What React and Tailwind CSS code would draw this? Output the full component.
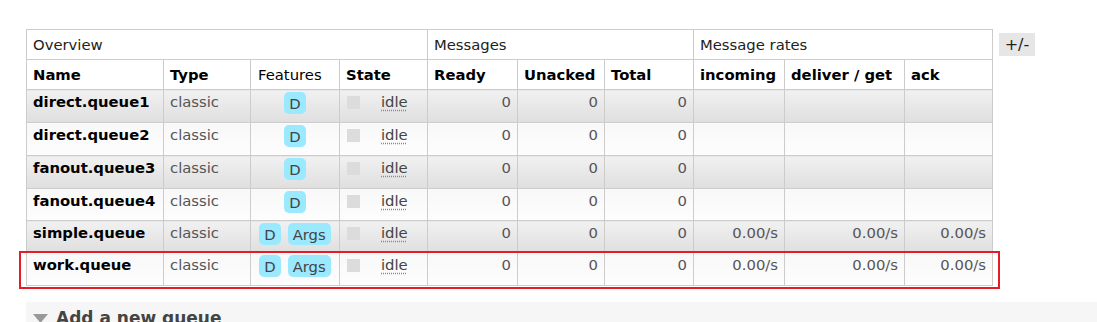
import React from "react";

const queues = [
  { name: "direct.queue1", args: false, rates: false },
  { name: "direct.queue2", args: false, rates: false },
  { name: "fanout.queue3", args: false, rates: false },
  { name: "fanout.queue4", args: false, rates: false },
  { name: "simple.queue", args: true, rates: true },
  { name: "work.queue", args: true, rates: true },
];

const rowHeights = ["h-[33px]", "h-[33px]", "h-[33px]", "h-[32px]", "h-[32px]", "h-[33px]"];

function Badge({ children }) {
  return (
    <span className="inline-flex h-[22px] items-center rounded-[5px] bg-[#9be9ff] px-[5px] text-[#444]">
      {children}
    </span>
  );
}

function QueueRow({ q, i }) {
  const bg =
    i % 2 === 0
      ? "bg-linear-to-b from-[#f1f1f1] to-[#dfdfdf]"
      : "bg-linear-to-b from-[#f8f8f8] to-[#fdfdfd]";
  const td = `border border-[#cccccc] align-top pt-[3px] px-[6px] ${bg}`;
  return (
    <tr className={rowHeights[i]}>
      <td className={`${td} font-bold text-black`}>{q.name}</td>
      <td className={`${td} text-[#555]`}>classic</td>
      <td className={`border border-[#cccccc] align-top pt-[2px] px-[6px] ${bg}`}>
        <div className="flex justify-center gap-[7px]">
          <Badge>D</Badge>
          {q.args && <Badge>Args</Badge>}
        </div>
      </td>
      <td className={`${td} pl-[7px]`}>
        <div className="flex items-start gap-[21px]">
          <span className="mt-[3px] h-[13px] w-[13px] bg-[#dcdcdc]" />
          <span className="text-[#444] underline decoration-dotted decoration-[#888] underline-offset-[3px]">
            idle
          </span>
        </div>
      </td>
      <td className={`${td} text-right text-[#555]`}>0</td>
      <td className={`${td} text-right text-[#555]`}>0</td>
      <td className={`${td} text-right text-[#555]`}>0</td>
      <td className={`${td} text-right text-[#555]`}>{q.rates ? "0.00/s" : ""}</td>
      <td className={`${td} text-right text-[#555]`}>{q.rates ? "0.00/s" : ""}</td>
      <td className={`${td} text-right text-[#555]`}>{q.rates ? "0.00/s" : ""}</td>
    </tr>
  );
}

export default function App() {
  const th = "border border-[#cccccc] bg-white px-[6px] text-left align-middle";
  return (
    <div className="relative min-h-[322px] overflow-hidden bg-white pl-[26px] pt-[29px] font-['DejaVu_Sans','Verdana',sans-serif] text-[14.8px] leading-[normal] text-[#222]">
      <div className="flex items-start gap-[6px]">
        <table className="table-fixed border-collapse">
          <colgroup>
            <col className="w-[137px]" />
            <col className="w-[87px]" />
            <col className="w-[89px]" />
            <col className="w-[88px]" />
            <col className="w-[90px]" />
            <col className="w-[87px]" />
            <col className="w-[89px]" />
            <col className="w-[91px]" />
            <col className="w-[120px]" />
            <col className="w-[88px]" />
          </colgroup>
          <thead>
            <tr className="h-[30px]">
              <th colSpan={4} className={`${th} font-normal`}>Overview</th>
              <th colSpan={3} className={`${th} font-normal`}>Messages</th>
              <th colSpan={3} className={`${th} font-normal`}>Message rates</th>
            </tr>
            <tr className="h-[30px] text-black">
              <th className={`${th} font-bold`}>Name</th>
              <th className={`${th} font-bold`}>Type</th>
              <th className={`${th} pl-[7px] font-normal`}>Features</th>
              <th className={`${th} font-bold`}>State</th>
              <th className={`${th} font-bold`}>Ready</th>
              <th className={`${th} font-bold`}>Unacked</th>
              <th className={`${th} font-bold`}>Total</th>
              <th className={`${th} font-bold`}>incoming</th>
              <th className={`${th} font-bold`}>deliver / get</th>
              <th className={`${th} font-bold`}>ack</th>
            </tr>
          </thead>
          <tbody>
            {queues.map((q, i) => (
              <QueueRow key={q.name} q={q} i={i} />
            ))}
          </tbody>
        </table>
        <button className="mt-[4px] flex h-[23px] w-[36px] items-center justify-center bg-[#e6e6e6] text-[16px] text-[#222]">
          +/-
        </button>
      </div>

      <div className="mt-[16px] flex h-[40px] items-start gap-[8px] bg-[#f6f6f6] pl-[7px] pt-[6px]">
        <svg width="15" height="9" viewBox="0 0 15 9" className="mt-[6px]">
          <polygon points="0,0 15,0 7.5,9" fill="#999" />
        </svg>
        <span className="text-[17px] font-bold text-[#444]">Add a new queue</span>
      </div>

      <div className="pointer-events-none absolute left-[19px] top-[251px] h-[38px] w-[981px] border-2 border-[#e31c25]" />
    </div>
  );
}
